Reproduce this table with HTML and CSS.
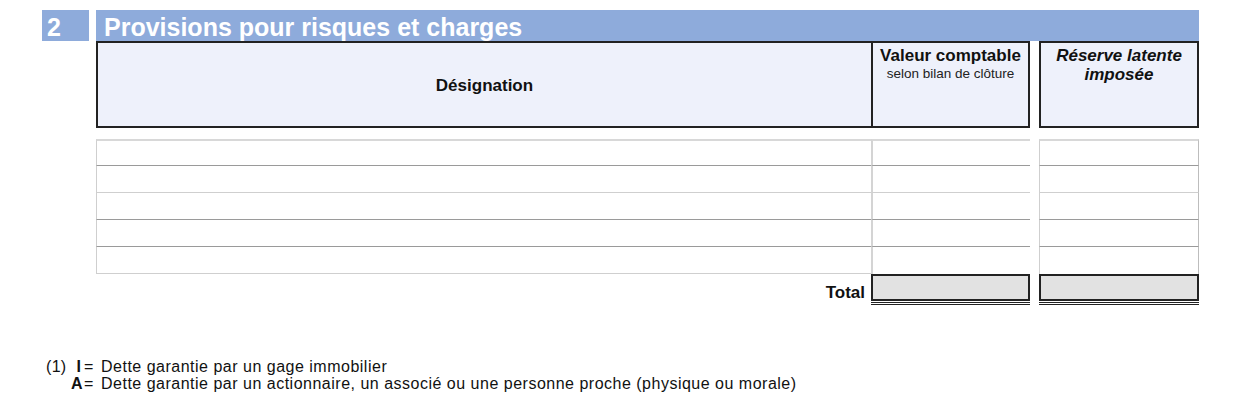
FILE: index.html
```html
<!DOCTYPE html>
<html lang="fr">
<head>
<meta charset="utf-8">
<title>Provisions pour risques et charges</title>
<link rel="stylesheet" href="styles.css">
</head>
<body>
<div class="page">
  <div class="section-head">
    <div class="badge">2</div>
    <div class="title">Provisions pour risques et charges</div>
  </div>

  <div class="grid">
    <div class="hcell h-desig">Désignation</div>
    <div class="hcell h-val"><span class="h-main">Valeur comptable</span><span class="h-sub">selon bilan de clôture</span></div>
    <div class="gapcell"></div>
    <div class="hcell h-res"><span class="h-main it">Réserve latente<br>imposée</span></div>

    <div class="spacer"></div>

    <div class="bcell d first b-dark"></div><div class="bcell v first b-dark"></div><div class="gapcell"></div><div class="bcell r first b-dark"></div>
    <div class="bcell d b-light"></div><div class="bcell v b-light"></div><div class="gapcell"></div><div class="bcell r b-light"></div>
    <div class="bcell d b-dark"></div><div class="bcell v b-dark"></div><div class="gapcell"></div><div class="bcell r b-dark"></div>
    <div class="bcell d b-dark"></div><div class="bcell v b-dark"></div><div class="gapcell"></div><div class="bcell r b-dark"></div>
    <div class="bcell d b-light"></div><div class="bcell v"></div><div class="gapcell"></div><div class="bcell r"></div>

    <div class="total-label">Total</div>
    <div class="total-wrap"><div class="total-box"></div></div>
    <div class="gapcell"></div>
    <div class="total-wrap"><div class="total-box"></div></div>
  </div>

  <div class="foot">
    <span class="fn">(1)</span><span class="key">I</span><span class="eq">=</span><span class="txt">Dette garantie par un gage immobilier</span>
    <span class="fn"></span><span class="key">A</span><span class="eq">=</span><span class="txt">Dette garantie par un actionnaire, un associé ou une personne proche (physique ou morale)</span>
  </div>
</div>
</body>
</html>
```

FILE: styles.css
```css
* { box-sizing: border-box; }
html, body { margin: 0; padding: 0; background: #fff; }
body {
  font-family: "Liberation Sans", Arial, Helvetica, sans-serif;
  color: #111;
  width: 1240px;
  height: 405px;
  overflow: hidden;
}
.page { padding-top: 10px; }

.section-head {
  display: flex;
  gap: 7px;
  padding-left: 42px;
  height: 31px;
}
.badge {
  width: 47px;
  background: #8eabdb;
  color: #fff;
  font-weight: bold;
  font-size: 25px;
  line-height: 34px;
  padding-left: 5px;
}
.title {
  width: 1103px;
  background: #8eabdb;
  color: #fff;
  font-weight: bold;
  font-size: 25px;
  line-height: 34px;
  padding-left: 8px;
  white-space: nowrap;
}

.grid {
  margin-left: 96px;
  display: grid;
  grid-template-columns: 775px 159px 9px 160px;
  grid-template-rows: 87px 11px repeat(5, 27px) 31px;
}

.hcell {
  background: #eef1fb;
  border: 2px solid #222;
  display: flex;
  flex-direction: column;
  align-items: center;
  text-align: center;
}
.h-desig {
  border-right: none;
  justify-content: center;
  font-weight: bold;
  font-size: 17px;
  padding-top: 3px;
}
.h-main {
  font-weight: bold;
  font-size: 17px;
  line-height: 19px;
  padding-top: 3px;
}
.h-main.it { font-style: italic; }
.h-sub {
  font-size: 13.5px;
  line-height: 17px;
  color: #222;
}
.spacer { grid-column: 1 / -1; }

.bcell { border-left: 1px solid #cfcfcf; }
.bcell.v { border-left: 2px solid #d4d4d4; }
.bcell.r { border-right: 1px solid #bdbdbd; }
.bcell.first { border-top: 2px solid #d8d8d8; }
.bcell.b-dark { border-bottom: 1px solid #9a9a9a; }
.bcell.b-light { border-bottom: 1px solid #cfcfcf; }

.total-label {
  text-align: right;
  font-weight: bold;
  font-size: 17px;
  line-height: 20px;
  padding-right: 6px;
  padding-top: 9px;
}
.total-wrap {
  border-bottom: 3px double #222;
  padding-bottom: 1px;
  height: 31px;
}
.total-box {
  height: 27px;
  background: #e2e2e2;
  border: 2px solid #222;
}

.foot {
  margin-top: 53px;
  padding-left: 46px;
  display: grid;
  grid-template-columns: 25px 10px 20px auto;
  font-size: 16px;
  line-height: 17px;
  color: #111;
}
.foot .fn { letter-spacing: 0.3px; }
.foot .key { font-weight: bold; text-align: right; }
.foot .eq { padding-left: 3px; }
.foot .txt { letter-spacing: 0.5px; }
```
